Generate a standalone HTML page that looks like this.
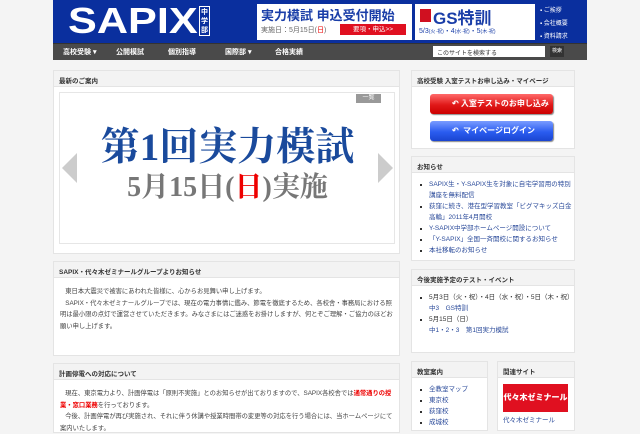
<!DOCTYPE html>
<html><head><meta charset="utf-8"><style>
*{margin:0;padding:0;box-sizing:border-box}
body{width:640px;height:426px;overflow:hidden;background:#f4f4f4;font-family:"Liberation Sans","Noto Sans CJK JP",sans-serif;font-size:7px;color:#333;position:relative}
.a{position:absolute}
.hdr{left:53px;top:0;width:534px;height:43px;background:#0a2f9e}
.nav{left:53px;top:43px;width:534px;height:17px;background:#4a4a4a;border-top:1px solid #333}
.nav span{position:absolute;top:3px;color:#fff;font-size:7px;font-weight:bold}
.box{position:absolute;background:#fff;border:1px solid #e4e4e4}
.box .h{height:16px;background:#f3f3f3;border-bottom:1px solid #e4e4e4;font-size:6.5px;font-weight:bold;padding:4px 5px;color:#333;white-space:nowrap}
ul{list-style:none;padding:6px 0 0 8px}
li{position:relative;padding-left:9px;color:#2a4a9a;font-size:6.5px;line-height:11px}
li:before{content:"";position:absolute;left:0;top:5px;width:2px;height:2px;background:#333}
p{font-size:6.3px;line-height:11.5px;color:#444}
</style></head><body>
<div class="a hdr"></div>
<div class="a" style="left:68px;top:2px;color:#fff;font:900 36px/38px 'Liberation Sans',sans-serif;transform:scaleX(1.2);transform-origin:0 0">SAPIX</div>
<div class="a" style="left:199px;top:6px;width:11px;height:30px;border:1px solid #fff;color:#fff;font-size:7px;line-height:9px;text-align:center;font-weight:bold;padding-top:1px">中学部</div>
<div class="a" style="left:257px;top:4px;width:155px;height:36px;background:#fff"></div>
<div class="a" style="left:261px;top:5px;color:#1a3ea8;font-size:13px;font-weight:bold;white-space:nowrap">実力模試 申込受付開始</div>
<div class="a" style="left:261px;top:25px;color:#666;font-size:7px;white-space:nowrap">実施日：5月15日(<span style="color:#e00">日</span>)</div>
<div class="a" style="left:340px;top:24px;width:66px;height:11px;background:#e01020;color:#fff;font-size:6.5px;line-height:11px;text-align:center">要項・申込>></div>
<div class="a" style="left:415px;top:4px;width:120px;height:36px;background:#fff"></div>
<div class="a" style="left:420px;top:9px;width:11px;height:13px;background:#d01020"></div>
<div class="a" style="left:433px;top:4px;color:#1a3ea8;font-size:17px;font-weight:bold;white-space:nowrap">GS特訓</div>
<div class="a" style="left:419px;top:26px;color:#1a3ea8;font-size:7px;white-space:nowrap">5/3<span style="font-size:5px">(火·祝)</span>・4<span style="font-size:5px">(水·祝)</span>・5<span style="font-size:5px">(木·祝)</span></div>
<div class="a" style="left:540px;top:5px;color:#fff;font-size:6px;line-height:13px;white-space:nowrap">▪ ご挨拶<br>▪ 会社概要<br>▪ 資料請求</div>
<div class="a nav"><span style="left:10px">高校受験 ▾</span><span style="left:63px">公開模試</span><span style="left:115px">個別指導</span><span style="left:172px">国際部 ▾</span><span style="left:222px">合格実績</span>
<div class="a" style="left:380px;top:2px;width:112px;height:11px;background:#fff;font-size:6px;color:#333;padding:2px 4px">このサイトを検索する</div>
<div class="a" style="left:497px;top:2px;width:14px;height:11px;background:#333;color:#fff;font-size:5px;line-height:11px;text-align:center">検索</div></div>

<div class="box" style="left:53px;top:70px;width:347px;height:184px"><div class="h">最新のご案内</div>
<div class="a" style="left:5px;top:21px;width:336px;height:152px;border:1px solid #e6e6e6"></div>
<div class="a" style="left:302px;top:23px;width:25px;height:9px;background:#999;color:#fff;font-size:6px;line-height:9px;text-align:center">一覧</div>
<div class="a" style="left:8px;top:82px;width:0;height:0;border-top:15px solid transparent;border-bottom:15px solid transparent;border-right:15px solid #ccc"></div>
<div class="a" style="left:324px;top:82px;width:0;height:0;border-top:15px solid transparent;border-bottom:15px solid transparent;border-left:15px solid #ccc"></div>
<div class="a" style="left:0;width:347px;top:56px;text-align:center;color:#1a4a9c;font:bold 39px/42px 'Liberation Serif','Noto Serif CJK SC',serif;white-space:nowrap">第1回実力模試</div>
<div class="a" style="left:0;width:347px;top:101px;text-align:center;color:#777;font:bold 28px/32px 'Liberation Serif','Noto Serif CJK SC',serif;white-space:nowrap">5月15日(<span style="color:#e00">日</span>)実施</div>
</div>

<div class="box" style="left:53px;top:261px;width:347px;height:95px"><div class="h">SAPIX・代々木ゼミナールグループよりお知らせ</div>
<p style="padding:8px 6px 0">&nbsp;&nbsp;&nbsp;東日本大震災で被害にあわれた皆様に、心からお見舞い申し上げます。<br>&nbsp;&nbsp;&nbsp;SAPIX・代々木ゼミナールグループでは、現在の電力事情に鑑み、節電を徹底するため、各校舎・事務局における照明は最小限の点灯で運営させていただきます。みなさまにはご迷惑をお掛けしますが、何とぞご理解・ご協力のほどお願い申し上げます。</p></div>

<div class="box" style="left:53px;top:363px;width:347px;height:70px"><div class="h">計画停電への対応について</div>
<p style="padding:8px 6px 0">&nbsp;&nbsp;&nbsp;現在、東京電力より、計画停電は「原則不実施」とのお知らせが出ておりますので、SAPIX各校舎では<b style="color:#e00">通常通りの授業・窓口業務</b>を行っております。<br>&nbsp;&nbsp;&nbsp;今後、計画停電が再び実施され、それに伴う休講や授業時間帯の変更等の対応を行う場合には、当ホームページにて案内いたします。</p></div>

<div class="box" style="left:411px;top:70px;width:164px;height:79px"><div class="h">高校受験 入室テストお申し込み・マイページ</div>
<div class="a" style="left:18px;top:23px;width:123px;height:20px;border-radius:3px;background:linear-gradient(#ff6a6a,#e01818 55%,#c00);box-shadow:1px 1px 1px #888;color:#fff;font-size:8px;font-weight:bold;line-height:20px;padding-left:22px">↶ 入室テストのお申し込み</div>
<div class="a" style="left:18px;top:50px;width:123px;height:20px;border-radius:3px;background:linear-gradient(#7a9cff,#2a5cf0 55%,#1a44d0);box-shadow:1px 1px 1px #888;color:#fff;font-size:8px;font-weight:bold;line-height:20px;padding-left:22px">↶&nbsp;&nbsp;マイページログイン</div></div>

<div class="box" style="left:411px;top:156px;width:164px;height:105px"><div class="h">お知らせ</div>
<ul><li>SAPIX生・Y-SAPIX生を対象に自宅学習用の特別講座を無料配信</li><li>荻窪に続き、港在型学習教室「ビグマキッズ白金高輪」2011年4月開校</li><li>Y-SAPIX中学部ホームページ開設について</li><li>「Y-SAPIX」全国一斉開校に関するお知らせ</li><li>本社移転のお知らせ</li></ul></div>

<div class="box" style="left:411px;top:269px;width:164px;height:84px"><div class="h">今後実施予定のテスト・イベント</div>
<ul><li style="color:#333">5月3日（火・祝）・4日（水・祝）・5日（木・祝）<br><span style="color:#2a4a9a">中3　GS特訓</span></li><li style="color:#333">5月15日（日）<br><span style="color:#2a4a9a">中1・2・3　第1回実力模試</span></li></ul></div>

<div class="box" style="left:411px;top:361px;width:77px;height:70px"><div class="h">教室案内</div>
<ul><li>全教室マップ</li><li>東京校</li><li>荻窪校</li><li>成城校</li></ul></div>
<div class="box" style="left:497px;top:361px;width:78px;height:70px"><div class="h">関連サイト</div>
<div class="a" style="left:5px;top:22px;width:65px;height:28px;background:#e01020;color:#fff;font-size:8px;font-weight:900;line-height:28px;text-align:center;white-space:nowrap;overflow:hidden">代々木ゼミナール</div>
<div class="a" style="left:5px;top:52px;color:#2a4a9a;font-size:6.5px;white-space:nowrap">代々木ゼミナール</div></div>
</body></html>
